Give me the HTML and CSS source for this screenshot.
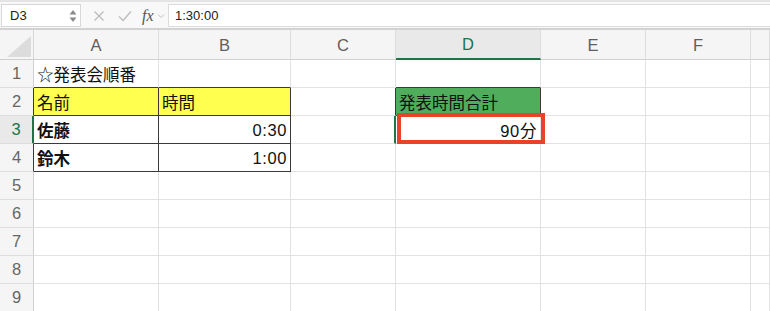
FILE: index.html
```html
<!DOCTYPE html>
<html lang="ja">
<head>
<meta charset="utf-8">
<title>Sheet</title>
<link rel="stylesheet" href="styles.css">
</head>
<body>
<div class="app">
  <div class="toolbar">
    <div class="namebox">
      <span class="name">D3</span>
      <span class="spin">
        <svg width="8" height="14" viewBox="0 0 8 14"><path d="M4 1 L7.5 5.5 L0.5 5.5 Z" fill="#8a8a8a"/><path d="M4 13 L7.5 8.5 L0.5 8.5 Z" fill="#8a8a8a"/></svg>
      </span>
    </div>
    <div class="tools">
      <svg class="ic cancel" width="12" height="12" viewBox="0 0 12 12"><path d="M1.5 1.5 L10.5 10.5 M10.5 1.5 L1.5 10.5" stroke="#bdbdbd" stroke-width="1.4" fill="none"/></svg>
      <svg class="ic ok" width="14" height="12" viewBox="0 0 14 12"><path d="M1 6.5 L5 10.5 L13 1.5" stroke="#bdbdbd" stroke-width="1.4" fill="none"/></svg>
      <span class="fx">fx</span>
      <svg class="ic chev" width="8" height="6" viewBox="0 0 8 6"><path d="M1 1.5 L4 4.5 L7 1.5" stroke="#c4c4c4" stroke-width="1" fill="none"/></svg>
    </div>
    <div class="formula">1:30:00</div>
  </div>
  <div class="sheet">
    <div class="corner"><span class="tri"></span></div>
    <div class="ch">A</div>
    <div class="ch">B</div>
    <div class="ch">C</div>
    <div class="ch sel">D</div>
    <div class="ch">E</div>
    <div class="ch">F</div>
    <div class="ch last"></div>

    <div class="rh">1</div>
    <div class="c dbot">☆発表会順番</div>
    <div class="c dbot"></div>
    <div class="c"></div>
    <div class="c dbot"></div>
    <div class="c"></div>
    <div class="c"></div>
    <div class="c"></div>

    <div class="rh dright">2</div>
    <div class="c yellow dright dbot">名前</div>
    <div class="c yellow dright dbot">時間</div>
    <div class="c dright"></div>
    <div class="c green dright dbot">発表時間合計</div>
    <div class="c"></div>
    <div class="c"></div>
    <div class="c"></div>

    <div class="rh rsel">3</div>
    <div class="c bold dright dbot">佐藤</div>
    <div class="c num dright dbot">0:30</div>
    <div class="c gsel"></div>
    <div class="c num">90分</div>
    <div class="c"></div>
    <div class="c"></div>
    <div class="c"></div>

    <div class="rh dright">4</div>
    <div class="c bold dright dbot">鈴木</div>
    <div class="c num dright dbot">1:00</div>
    <div class="c"></div>
    <div class="c"></div>
    <div class="c"></div>
    <div class="c"></div>
    <div class="c"></div>

    <div class="rh">5</div>
    <div class="c"></div><div class="c"></div><div class="c"></div><div class="c"></div><div class="c"></div><div class="c"></div><div class="c"></div>
    <div class="rh">6</div>
    <div class="c"></div><div class="c"></div><div class="c"></div><div class="c"></div><div class="c"></div><div class="c"></div><div class="c"></div>
    <div class="rh">7</div>
    <div class="c"></div><div class="c"></div><div class="c"></div><div class="c"></div><div class="c"></div><div class="c"></div><div class="c"></div>
    <div class="rh">8</div>
    <div class="c"></div><div class="c"></div><div class="c"></div><div class="c"></div><div class="c"></div><div class="c"></div><div class="c"></div>
    <div class="rh">9</div>
    <div class="c"></div><div class="c"></div><div class="c"></div><div class="c"></div><div class="c"></div><div class="c"></div><div class="c"></div>
  </div>
  <div class="redbox"></div>
</div>
</body>
</html>
```

FILE: styles.css
```css
* { box-sizing: border-box; }
html, body { margin: 0; padding: 0; background: #ffffff; }
body {
  width: 770px;
  height: 311px;
  overflow: hidden;
  font-family: "Liberation Sans", "Noto Sans CJK JP", sans-serif;
}
.app { position: relative; width: 770px; height: 311px; overflow: hidden; }

.toolbar {
  height: 28px;
  display: flex;
  align-items: flex-start;
  background: #f8f8f8;
  border-top: 2px solid #e4e4e4;
  padding-top: 2px;
}
.namebox {
  margin-left: 1px;
  width: 80px;
  height: 23px;
  background: #ffffff;
  border: 1px solid #d7d7d7;
  display: flex;
  align-items: center;
  justify-content: space-between;
  padding: 0 3px 0 8px;
}
.name { font-size: 13px; color: #222; }
.spin { display: flex; align-items: center; }
.tools {
  width: 87px;
  height: 23px;
  display: flex;
  align-items: center;
  padding-left: 12px;
}
.ic.cancel { margin-right: 13px; }
.ic.ok { margin-right: 10px; }
.fx {
  font-family: "Liberation Serif", "DejaVu Serif", serif;
  font-style: italic;
  font-size: 16px;
  color: #555;
  margin-right: 3px;
}
.formula {
  flex: 1;
  height: 23px;
  background: #ffffff;
  border: 1px solid #dcdcdc;
  border-right: none;
  display: flex;
  align-items: center;
  padding-left: 6px;
  font-size: 13px;
  color: #222;
}

.sheet {
  display: grid;
  grid-template-columns: 34px 125px 132px 105px 145px 105px 105px 19px;
  grid-template-rows: 30px repeat(9, 28px);
  border-top: 2px solid #d2d2d2;
}
.corner {
  position: relative;
  background: #f5f5f5;
  border-right: 1px solid #d6d6d6;
  border-bottom: 1px solid #cfcfcf;
}
.tri {
  position: absolute;
  right: 2px;
  bottom: 2px;
  width: 0;
  height: 0;
  border-left: 24px solid transparent;
  border-bottom: 21px solid #dcdcdc;
}
.ch {
  background: #f5f5f5;
  border-right: 1px solid #dddddd;
  border-bottom: 1px solid #cfcfcf;
  display: flex;
  align-items: center;
  justify-content: center;
  font-size: 16.5px;
  color: #5e5e5e;
  padding-top: 1px;
}
.ch.sel {
  background: #e9e9e9;
  color: #217346;
  border-bottom: 2px solid #217346;
}
.rh {
  background: #f5f5f5;
  border-right: 1px solid #d0d0d0;
  border-bottom: 1px solid #dddddd;
  display: flex;
  align-items: center;
  justify-content: center;
  font-size: 16.5px;
  color: #666666;
}
.rh.rsel {
  background: #e9e9e9;
  color: #217346;
  border-right: 2px solid #217346;
}
.c {
  border-right: 1px solid #e2e2e2;
  border-bottom: 1px solid #e2e2e2;
  display: flex;
  align-items: center;
  padding: 1px 3px 0 3px;
  font-size: 16.5px;
  color: #111;
  white-space: nowrap;
  overflow: hidden;
}
.c.num { justify-content: flex-end; letter-spacing: 0.6px; }
.c.bold { font-weight: bold; }
.c.yellow { background: #ffff4f; }
.c.green { background: #4fad5b; }
.dbot { border-bottom-color: #3a3a3a; }
.rh.dright, .c.dright { border-right-color: #3a3a3a; }
.c.gsel { border-right: 2px solid #217346; }

.redbox {
  position: absolute;
  left: 397px;
  top: 113px;
  width: 148px;
  height: 31px;
  border: 4px solid #e8432a;
}
```
